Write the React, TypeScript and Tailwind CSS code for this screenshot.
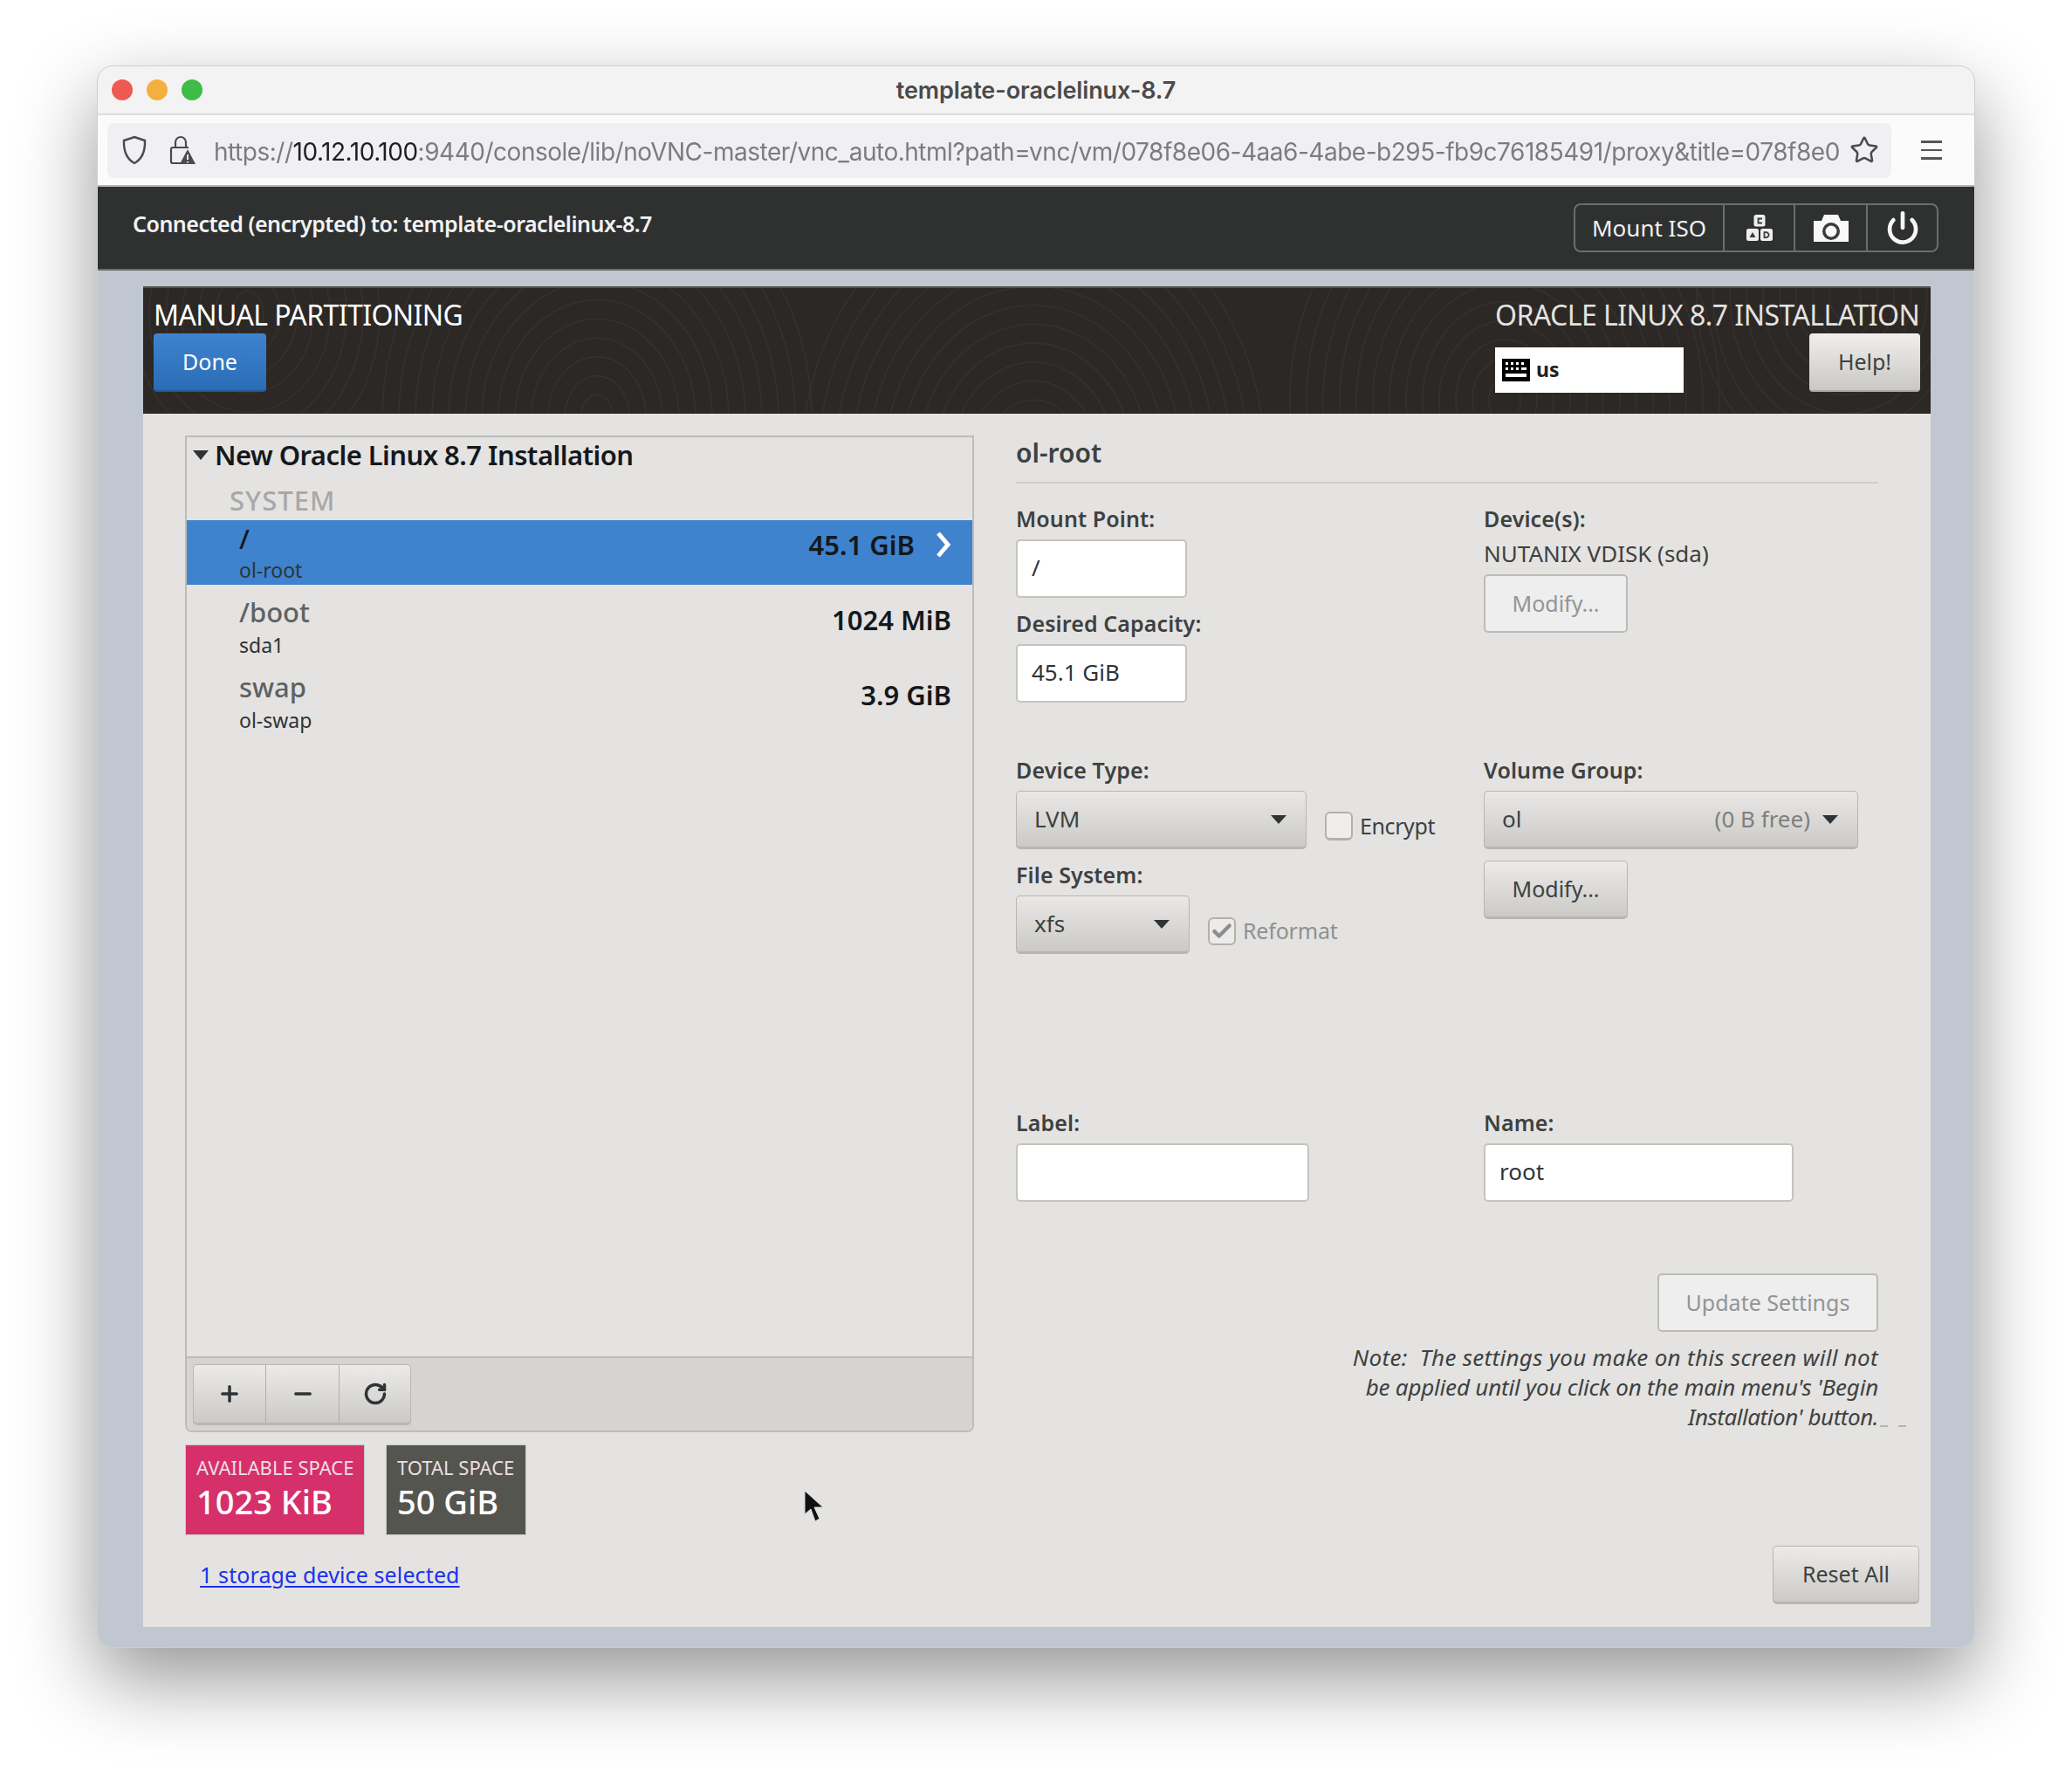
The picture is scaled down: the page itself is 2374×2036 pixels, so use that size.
import { Star, RotateCw, Plus, Minus, Check, Power } from 'lucide-react'

const noto = { fontFamily: '"Noto Sans", sans-serif' }

function Waves() {
  const groups = [
    { cx: 520, cy: 150, n: 13 },
    { cx: 1020, cy: 200, n: 14 },
    { cx: 1560, cy: 130, n: 13 },
    { cx: 120, cy: 30, n: 8 },
    { cx: 1950, cy: 10, n: 9 },
  ]
  return (
    <svg className="absolute inset-0 w-full h-full" viewBox="0 0 2048 146" preserveAspectRatio="none" fill="none" stroke="#36312e" strokeWidth="1.6">
      {groups.map((g, i) => (
        <g key={i}>
          {Array.from({ length: g.n }, (_, k) => (
            <ellipse key={k} cx={g.cx} cy={g.cy} rx={18 + k * 19} ry={26 + k * 22} />
          ))}
        </g>
      ))}
    </svg>
  )
}

function Field({ label }: { label: string }) {
  return <div className="h-[30px] leading-[28px] text-[25px] font-semibold text-[#3d4142] tracking-[0.1px]">{label}</div>
}

function TextBox({ value, className }: { value?: string; className: string }) {
  return (
    <div className={`mt-[8px] h-[67px] bg-white border-2 border-[#c4c3be] rounded-[5px] px-[16px] text-[26px] leading-[60px] text-[#2e3436] ${className}`}>
      {value}
    </div>
  )
}

function Caret() {
  return <div className="w-0 h-0 border-x-[9px] border-x-transparent border-t-[10px] border-t-[#2e3436]" />
}

function Select({ className, value, extra }: { className: string; value: string; extra?: string }) {
  return (
    <div className={`mt-[8px] h-[67px] flex items-center justify-between pl-[20px] pr-[22px] rounded-[5px] border border-[#b7b6b1] border-b-[3px] bg-linear-to-b from-[#e9e8e6] to-[#cbcac7] text-[26px] text-[#3d4142] ${className}`}>
      <span>{value}</span>
      <span className="flex items-center gap-[14px]">
        {extra && <span className="text-[#7d7f7e]">{extra}</span>}
        <Caret />
      </span>
    </div>
  )
}

function Btn({ label, className, disabled }: { label: string; className: string; disabled?: boolean }) {
  return (
    <div
      className={`flex items-center justify-center h-[67px] rounded-[5px] text-[25px] ${
        disabled
          ? 'bg-[#eeeeee] border-2 border-[#bcbbb6] text-[#929595]'
          : 'bg-linear-to-b from-[#ecebe9] to-[#cbcac7] border border-[#b7b6b1] border-b-[3px] text-[#3d4142]'
      } ${className}`}
    >
      {label}
    </div>
  )
}

function Row({ name, sub, size, selected }: { name: string; sub: string; size: string; selected?: boolean }) {
  return (
    <div className={`h-[74px] flex justify-between pl-[60px] pr-[24px] ${selected ? 'bg-[#3f82cd] text-[#101418]' : 'text-[#5e6263]'}`}>
      <div className="flex flex-col">
        <span className={`h-[40px] text-[31px] font-medium ${selected ? 'leading-[42px] text-[#14181c]' : 'leading-[39px]'}`}>{name}</span>
        <span className="h-[30px] leading-[34px] text-[23px] text-[#2e3436]">{sub}</span>
      </div>
      <div className={`flex items-center h-[56px] text-[31px] font-semibold text-[#14181c] ${selected ? 'gap-[24px]' : ''}`}>
        <span>{size}</span>
        {selected && (
          <svg viewBox="0 0 18 30" className="w-[18px] h-[30px]" fill="none" stroke="#fff" strokeWidth="5">
            <path d="M3 2 L14 15 L3 28" />
          </svg>
        )}
      </div>
    </div>
  )
}

function Stat({ title, value, className }: { title: string; value: string; className: string }) {
  return (
    <div className={`h-[104px] px-[12px] pt-[9px] border border-[#c9c8c4] text-white ${className}`}>
      <div className="text-[22px] leading-[32px] text-[#ecdfe2] whitespace-nowrap">{title}</div>
      <div className="text-[38px] leading-[46px] font-medium whitespace-nowrap">{value}</div>
    </div>
  )
}

export default function App() {
  return (
    <div className="w-[2374px] h-[2036px] bg-white pt-[75px] pl-[111px]" style={noto}>
      <div className="relative w-[2152px] h-[1813px] rounded-[18px] overflow-hidden bg-[#c0c7d0] border border-[#cfcfcf] shadow-[0_36px_90px_rgba(0,0,0,0.42)] flex flex-col blur-[0.4px]">
        {/* browser chrome */}
        <div className="h-[56px] shrink-0 bg-[#f3f3f3] border-b-2 border-[#dcdcdc] flex items-center relative" style={{ fontFamily: 'Inter, sans-serif' }}>
          <div className="flex gap-[16px] pl-[16px]">
            <span className="w-[24px] h-[24px] rounded-full bg-[#ee5a52]" />
            <span className="w-[24px] h-[24px] rounded-full bg-[#f4b03e]" />
            <span className="w-[24px] h-[24px] rounded-full bg-[#3fbb47]" />
          </div>
          <div className="flex-1 text-center pr-[120px] pt-[2px] text-[27px] font-semibold text-[#4a4a4a] tracking-[-0.1px]">template-oraclelinux-8.7</div>
        </div>
        <div className="h-[82px] shrink-0 bg-[#fbfbfc] flex items-center pl-[11px] border-b-2 border-[#b5b5b5]" style={{ fontFamily: 'Inter, sans-serif' }}>
          <div className="w-[2044px] h-[63px] bg-[#efeff4] rounded-[8px] flex items-center pl-[16px] pr-[14px]">
            <svg viewBox="0 0 30 34" className="w-[30px] h-[34px] shrink-0" fill="none" stroke="#4a4a4f" strokeWidth="2.4">
              <path d="M15 2 L27 6 C27.5 18 24 27 15 32 C6 27 2.5 18 3 6 Z" />
            </svg>
            <svg viewBox="0 0 32 34" className="w-[32px] h-[34px] ml-[24px] shrink-0" fill="none" stroke="#4a4a4f" strokeWidth="2.2">
              <path d="M8 14V8a6 6 0 0 1 12 0v6" />
              <path d="M14 32H5a2 2 0 0 1-2-2V16a2 2 0 0 1 2-2h18" />
              <path d="M22 16 L31 33 H13 Z" fill="#4a4a4f" stroke="none" />
              <path d="M22 22v6M22 30v1.6" stroke="#fff" strokeWidth="1.8" />
            </svg>
            <div className="ml-[20px] flex-1 mt-[3px] text-[28px] tracking-[-0.48px] text-[#7b7b80] whitespace-nowrap overflow-hidden">
              https://<span className="text-[#1e1e20]">10.12.10.100</span>:9440/console/lib/noVNC-master/vnc_auto.html?path=vnc/vm/078f8e06-4aa6-4abe-b295-fb9c76185491/proxy&amp;title=078f8e0
            </div>
            <Star className="w-[34px] h-[34px] shrink-0 text-[#4a4a4f] ml-[10px]" strokeWidth={1.8} />
          </div>
          <div className="ml-[34px] flex flex-col gap-[7px]">
            <span className="w-[24px] h-[2.5px] bg-[#55555a]" />
            <span className="w-[24px] h-[2.5px] bg-[#55555a]" />
            <span className="w-[24px] h-[2.5px] bg-[#55555a]" />
          </div>
        </div>
        {/* vnc toolbar */}
        <div className="h-[96px] shrink-0 bg-[#2f3131] border-b-2 border-[#6a6c6e] flex items-center justify-between pl-[40px] pr-[41px]">
          <div className="text-[25px] font-semibold text-[#f2f2f2] -mt-[8px] tracking-[-0.5px]">Connected (encrypted) to: template-oraclelinux-8.7</div>
          <div className="flex h-[56px] w-[418px] shrink-0 border-2 border-[#6b6d6e] rounded-[8px] text-[#f0f0f0]">
            <div className="w-[171px] flex items-center justify-center text-[26px] border-r-2 border-[#6b6d6e]">Mount ISO</div>
            <div className="w-[81px] flex items-center justify-center border-r-2 border-[#6b6d6e]">
              <svg viewBox="0 0 30 30" className="w-[30px] h-[30px]">
                <rect x="8.5" y="0" width="13" height="13.5" rx="2.5" fill="#efefef" />
                <rect x="0" y="16" width="14" height="14" rx="2.5" fill="#efefef" />
                <rect x="16" y="16" width="14" height="14" rx="2.5" fill="#efefef" />
                <path d="M18 4.5h-4.5v5H18" fill="none" stroke="#3a3c3c" strokeWidth="1.8" />
                <path d="M7 20 L10.5 26 H3.5 Z" fill="#3a3c3c" />
                <path d="M20.5 20.2h3l2 2v2l-2 2h-3Z" fill="none" stroke="#3a3c3c" strokeWidth="1.8" />
              </svg>
            </div>
            <div className="w-[83px] flex items-center justify-center border-r-2 border-[#6b6d6e]">
              <svg viewBox="0 0 42 32" className="w-[42px] h-[32px]">
                <path fill="#f8f8f8" d="M1 8h9l3-7h16l3 7h9v24H1Z" />
                <circle cx="21" cy="20" r="10" fill="#3a3c3c" />
                <circle cx="21" cy="20" r="6.5" fill="#f8f8f8" />
              </svg>
            </div>
            <div className="flex-1 flex items-center justify-center">
              <Power className="w-[40px] h-[40px] text-[#f6f6f6]" strokeWidth={2.8} />
            </div>
          </div>
        </div>

        {/* installer */}
        <div className="mt-[18px] ml-[52px] w-[2048px] h-[1536px] flex flex-col shrink-0 bg-[#e4e3e1]">
          <div className="relative h-[146px] shrink-0 bg-[#2c2826] overflow-hidden border-t-2 border-[#55524f]">
            <Waves />
            <div className="relative flex justify-between pl-[12px] pr-[12px] pt-[12px]">
              <div>
                <div className="h-[38px] leading-[38px] text-[32px] text-white tracking-[-0.6px] whitespace-nowrap">MANUAL PARTITIONING</div>
                <div className="mt-[2px] w-[129px] h-[67px] rounded-[4px] bg-linear-to-b from-[#3f83d0] to-[#2a6db5] border-b-2 border-[#1f5a98] flex items-center justify-center text-[25px] text-white">Done</div>
              </div>
              <div className="w-[487px]">
                <div className="h-[38px] leading-[38px] text-[32px] text-[#e4e3e0] tracking-[-0.55px] whitespace-nowrap">ORACLE LINUX 8.7 INSTALLATION</div>
                <div className="flex justify-between">
                  <div className="mt-[18px] w-[216px] h-[52px] bg-white flex items-center pl-[8px] gap-[7px]">
                    <svg viewBox="0 0 32 26" className="w-[32px] h-[26px]">
                      <path fillRule="evenodd" d="M0 0h32v26H0Z M4 4v3h3V4Z M10 4v3h3V4Z M16 4v3h3V4Z M22 4v3h3V4Z M4 10v3h3v-3Z M10 10v3h3v-3Z M16 10v3h3v-3Z M22 10v3h6v-3Z M4 17v4h24v-4Z" />
                    </svg>
                    <span className="text-[23px] leading-[26px] font-bold text-[#222] -mt-[2px]">us</span>
                  </div>
                  <div className="mt-[2px] w-[127px] h-[67px] rounded-[4px] bg-linear-to-b from-[#f0efed] to-[#c9c8c5] border-b-2 border-[#a9a8a4] flex items-center justify-center text-[25px] text-[#3d4142]">Help!</div>
                </div>
              </div>
            </div>
          </div>

          <div className="flex flex-1">
            {/* left column */}
            <div className="w-[1000px] shrink-0 pl-[48px] pt-[25px]">
              <div className="w-[904px] h-[1142px] border-2 border-[#bdbcb8] rounded-b-[8px] flex flex-col bg-[#e4e3e1]">
                <div className="flex-1">
                  <div className="h-[40px] flex items-center pl-[7px]">
                    <div className="w-0 h-0 border-x-[9px] border-x-transparent border-t-[11px] border-t-[#2e3436]" />
                    <span className="ml-[7px] text-[31px] font-semibold text-[#14181c] tracking-[-0.55px]">New Oracle Linux 8.7 Installation</span>
                  </div>
                  <div className="h-[55px] pl-[49px] pt-[10px] leading-[44px] text-[31px] font-medium text-[#a8a8a7] tracking-[1px]">SYSTEM</div>
                  <Row name="/" sub="ol-root" size="45.1 GiB" selected />
                  <div className="mt-[12px]">
                    <Row name="/boot" sub="sda1" size="1024 MiB" />
                  </div>
                  <div className="mt-[12px]">
                    <Row name="swap" sub="ol-swap" size="3.9 GiB" />
                  </div>
                </div>
                <div className="h-[85px] shrink-0 bg-[#d5d4d2] border-t-2 border-[#bdbcb8] rounded-b-[8px] pl-[7px] pt-[7px]">
                  <div className="w-[250px] h-[70px] flex rounded-[5px] border border-[#b7b6b1] border-b-[3px] bg-linear-to-b from-[#ecebe9] to-[#cbcac7] text-[#2e3436]">
                    <div className="w-[83px] flex items-center justify-center border-r border-[#b0afaa]"><Plus className="w-[28px] h-[28px]" strokeWidth={3} /></div>
                    <div className="w-[84px] flex items-center justify-center border-r border-[#b0afaa]"><Minus className="w-[28px] h-[28px]" strokeWidth={3} /></div>
                    <div className="flex-1 flex items-center justify-center"><RotateCw className="w-[28px] h-[28px]" strokeWidth={3} /></div>
                  </div>
                </div>
              </div>
              <div className="mt-[14px] flex gap-[24px]">
                <Stat title="AVAILABLE SPACE" value="1023 KiB" className="w-[206px] bg-[#d6306b]" />
                <Stat title="TOTAL SPACE" value="50 GiB" className="w-[161px] bg-[#55554f]" />
              </div>
              <div className="mt-[28px] pl-[17px] text-[25px] leading-[34px] tracking-[0.12px] text-[#1a32ee] underline underline-offset-[3px]">1 storage device selected</div>
            </div>

            {/* right column */}
            <div className="flex-1 flex flex-col pt-[25px] pr-[13px]">
              <div className="w-[988px] h-[55px] border-b-2 border-[#cfcecb] text-[30px] font-semibold leading-[40px] text-[#3d4142]">ol-root</div>
              <div className="flex mt-[26px]">
                <div className="w-[536px] shrink-0">
                  <Field label="Mount Point:" />
                  <TextBox value="/" className="w-[196px]" />
                  <div className="mt-[15px]"><Field label="Desired Capacity:" /></div>
                  <TextBox value="45.1 GiB" className="w-[196px]" />
                  <div className="mt-[63px]"><Field label="Device Type:" /></div>
                  <div className="flex items-start">
                    <Select value="LVM" className="w-[333px]" />
                    <div className="ml-[21px] mt-[30px] flex items-center gap-[8px] text-[25px] text-[#3d4142]">
                      <span className="w-[32px] h-[33px] rounded-[6px] border-2 border-b-[3px] border-[#b2b1ac] bg-[#efeeec]" />
                      <span className="tracking-[-0.4px]">Encrypt</span>
                    </div>
                  </div>
                  <div className="mt-[15px]"><Field label="File System:" /></div>
                  <div className="flex items-start">
                    <Select value="xfs" className="w-[199px]" />
                    <div className="ml-[21px] mt-[30px] flex items-center gap-[8px] text-[25px] text-[#8f9191]">
                      <span className="w-[32px] h-[32px] rounded-[6px] border-2 border-[#b2b1ac] bg-[#ecebe9] flex items-center justify-center">
                        <Check className="w-[26px] h-[26px] text-[#8c8e8e]" strokeWidth={4} />
                      </span>
                      <span className="tracking-[-0.2px]">Reformat</span>
                    </div>
                  </div>
                  <div className="mt-[179px]"><Field label="Label:" /></div>
                  <TextBox className="w-[336px]" />
                </div>
                <div className="flex-1">
                  <Field label="Device(s):" />
                  <div className="mt-[10px] h-[30px] leading-[28px] text-[26px] text-[#3d4142]">NUTANIX VDISK (sda)</div>
                  <Btn label="Modify..." disabled className="mt-[8px] w-[165px]" />
                  <div className="mt-[143px]"><Field label="Volume Group:" /></div>
                  <Select value="ol" extra="(0 B free)" className="w-[429px]" />
                  <Btn label="Modify..." className="mt-[13px] w-[165px]" />
                  <div className="mt-[219px]"><Field label="Name:" /></div>
                  <TextBox value="root" className="w-[355px]" />
                </div>
              </div>
              <div className="w-[988px] flex flex-col items-end mt-[82px]">
                <Btn label="Update Settings" disabled className="w-[253px]" />
                <div className="relative mt-[12px] flex flex-col items-end italic text-[26px] leading-[34px] text-[#3d4142] whitespace-pre">
                  <span className="tracking-[0.3px]">{'Note:  The settings you make on this screen will not'}</span>
                  <span className="tracking-[-0.2px]">{"be applied until you click on the main menu's 'Begin"}</span>
                  <span className="tracking-[-0.45px]">{"Installation' button."}</span>
                  <span className="absolute left-full bottom-[5px] flex gap-[12px] pl-[2px]">
                    <span className="w-[9px] h-[2px] bg-[#b5b4b0]" />
                    <span className="w-[9px] h-[2px] bg-[#b5b4b0]" />
                  </span>
                </div>
              </div>
              <Btn label="Reset All" className="mt-[131px] w-[168px] self-end" />
            </div>
          </div>
        </div>

        {/* mouse pointer */}
        <svg viewBox="0 0 24 38" className="absolute left-[809px] top-[1631px] w-[24px] h-[38px]">
          <path d="M1 1 L1 28 L8 22 L13 36 L18 33 L12 20 L22 20 Z" fill="#111" stroke="#ddd" strokeWidth="1" />
        </svg>
      </div>
    </div>
  )
}
